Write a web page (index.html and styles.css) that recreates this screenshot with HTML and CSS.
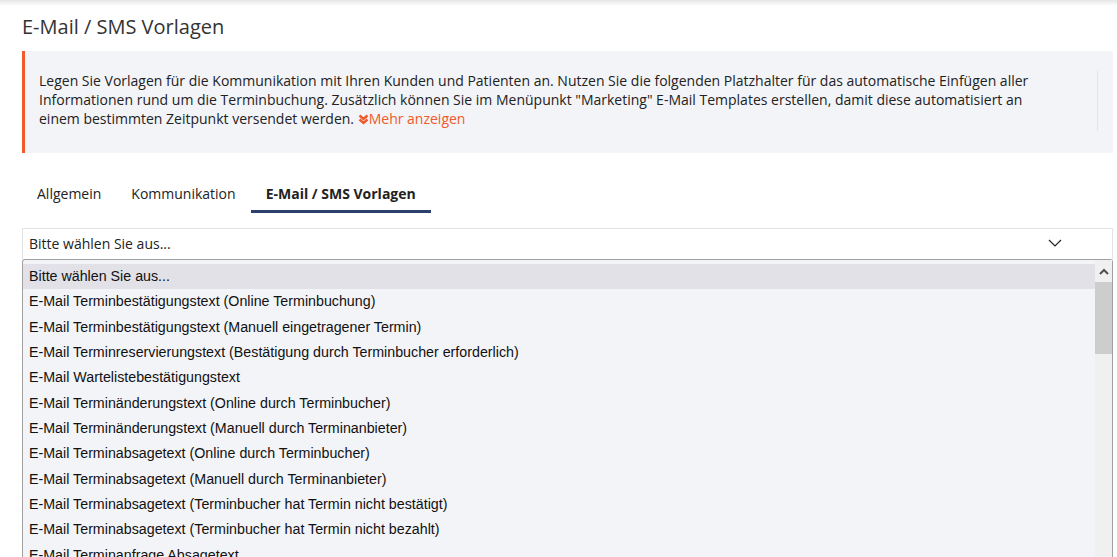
FILE: index.html
```html
<!DOCTYPE html>
<html lang="de">
<head>
<meta charset="utf-8">
<link rel="stylesheet" href="styles.css">
</head>
<body>
<div class="topbar"></div>
<div class="page">
  <h1 class="title">E-Mail / SMS Vorlagen</h1>
  <div class="info">
    <p class="info-text">Legen Sie Vorlagen für die Kommunikation mit Ihren Kunden und Patienten an. Nutzen Sie die folgenden Platzhalter für das automatische Einfügen aller Informationen rund um die Terminbuchung. Zusätzlich können Sie im Menüpunkt "Marketing" E-Mail Templates erstellen, damit diese automatisiert an einem bestimmten Zeitpunkt versendet werden. <span class="more"><svg class="more-icon" width="11" height="11" viewBox="0 0 11 11"><path d="M1.5 1.5 L5.5 5 L9.5 1.5 M1.5 5.5 L5.5 9 L9.5 5.5" fill="none" stroke="#f1592a" stroke-width="2.4"/></svg>Mehr anzeigen</span></p>
    <div class="info-divider"></div>
  </div>
  <nav class="tabs">
    <div class="tab">Allgemein</div>
    <div class="tab">Kommunikation</div>
    <div class="tab active">E-Mail / SMS Vorlagen</div>
  </nav>
  <div class="select">
    <span>Bitte wählen Sie aus...</span>
    <svg class="chev" width="14" height="8" viewBox="0 0 14 8"><path d="M1 1 L7 7 L13 1" fill="none" stroke="#222" stroke-width="1.2"/></svg>
  </div>
  <div class="list">
    <div class="options">
      <div class="opt sel">Bitte wählen Sie aus...</div>
      <div class="opt">E-Mail Terminbestätigungstext (Online Terminbuchung)</div>
      <div class="opt">E-Mail Terminbestätigungstext (Manuell eingetragener Termin)</div>
      <div class="opt">E-Mail Terminreservierungstext (Bestätigung durch Terminbucher erforderlich)</div>
      <div class="opt">E-Mail Wartelistebestätigungstext</div>
      <div class="opt">E-Mail Terminänderungstext (Online durch Terminbucher)</div>
      <div class="opt">E-Mail Terminänderungstext (Manuell durch Terminanbieter)</div>
      <div class="opt">E-Mail Terminabsagetext (Online durch Terminbucher)</div>
      <div class="opt">E-Mail Terminabsagetext (Manuell durch Terminanbieter)</div>
      <div class="opt">E-Mail Terminabsagetext (Terminbucher hat Termin nicht bestätigt)</div>
      <div class="opt">E-Mail Terminabsagetext (Terminbucher hat Termin nicht bezahlt)</div>
      <div class="opt">E-Mail Terminanfrage Absagetext</div>
    </div>
    <div class="scrollbar">
      <div class="sb-btn"><svg width="10" height="7" viewBox="0 0 10 7"><path d="M1 6 L5 2 L9 6" fill="none" stroke="#505050" stroke-width="2"/></svg></div>
      <div class="sb-thumb"></div>
      <div class="sb-track"></div>
      <div class="sb-btn"><svg width="10" height="7" viewBox="0 0 10 7"><path d="M1 1 L5 5 L9 1" fill="none" stroke="#505050" stroke-width="2"/></svg></div>
    </div>
  </div>
</div>
</body>
</html>
```

FILE: styles.css
```css
* { box-sizing: border-box; }
html, body { margin: 0; padding: 0; overflow: hidden; height: 557px; background: #fff; }
body { font-family: "Open Sans", sans-serif; color: #333; }

.topbar {
  height: 6px;
  background: linear-gradient(to bottom, #e6e6e6, #fff);
}

.page {
  padding: 0 4px 0 22px;
}

.title {
  margin: 7px 0 0 0;
  font-size: 20px;
  font-weight: 400;
  line-height: 27px;
  color: #333;
}

.info {
  margin-top: 11px;
  height: 102px;
  background: #f3f4f8;
  border-left: 3px solid #f1592a;
  display: flex;
  align-items: flex-start;
  padding: 20px 15px 0 14px;
}

.info-text {
  margin: 0;
  flex: 1;
  font-size: 14px;
  line-height: 19px;
  color: #222;
  padding-right: 40px;
}

.more { color: #f1592a; white-space: nowrap; }
.more-icon { vertical-align: -1px; margin-right: 0; }

.info-divider {
  width: 1px;
  height: 60px;
  background: #e2e3e8;
}

.tabs {
  display: flex;
  margin-top: 17px;
  height: 43px;
}

.tab {
  padding: 14px 15px 0 15px;
  font-size: 14px;
  line-height: 20px;
  color: #222;
}

.tab.active {
  font-weight: 700;
  border-bottom: 3px solid #2d3f6b;
}

.select {
  margin-top: 15px;
  height: 31px;
  border: 1px solid #e3e3e3;
  border-bottom: none;
  display: flex;
  align-items: center;
  justify-content: space-between;
  padding: 0 50px 2px 6px;
  font-size: 14px;
  color: #222;
}

.list {
  height: 320px;
  border: 1px solid #a0a0a0;
  border-bottom: none;
  border-radius: 3px 3px 0 0;
  background: #f3f4f8;
  display: flex;
  font-family: "Liberation Sans", Arial, sans-serif;
  font-size: 14.25px;
  color: #111;
}

.options {
  flex: 1;
  padding-top: 4px;
}

.opt {
  height: 25.35px;
  line-height: 25px;
  padding-left: 6px;
  white-space: nowrap;
}

.opt.sel { background: #e1e1e7; }

.scrollbar {
  width: 17px;
  display: flex;
  flex-direction: column;
  background: #f0f0f0;
}

.sb-btn {
  height: 22px;
  display: flex;
  align-items: center;
  justify-content: center;
}

.sb-thumb {
  height: 72px;
  background: #cdcdcd;
}

.sb-track { height: 198px; }
```
